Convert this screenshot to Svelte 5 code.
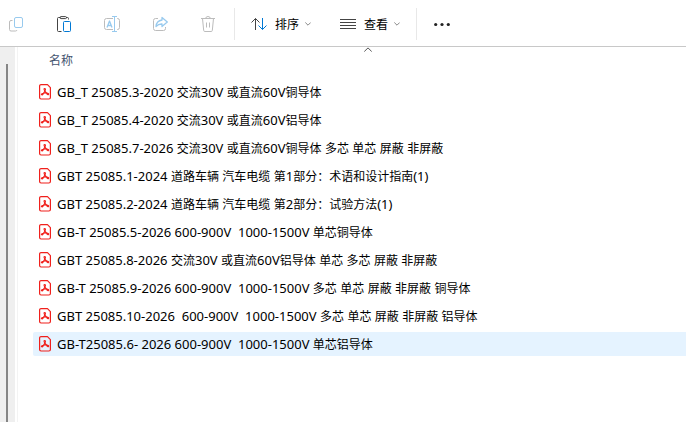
<script lang="ts">
	let files = [
		'GB_T 25085.3-2020 交流30V 或直流60V铜导体',
		'GB_T 25085.4-2020 交流30V 或直流60V铝导体',
		'GB_T 25085.7-2026 交流30V 或直流60V铜导体 多芯 单芯 屏蔽 非屏蔽',
		'GBT 25085.1-2024 道路车辆 汽车电缆 第1部分：术语和设计指南(1)',
		'GBT 25085.2-2024 道路车辆 汽车电缆 第2部分：试验方法(1)',
		'GB-T 25085.5-2026 600-900V  1000-1500V 单芯铜导体',
		'GBT 25085.8-2026 交流30V 或直流60V铝导体 单芯 多芯 屏蔽 非屏蔽',
		'GB-T 25085.9-2026 600-900V  1000-1500V 多芯 单芯 屏蔽 非屏蔽 铜导体',
		'GBT 25085.10-2026  600-900V  1000-1500V 多芯 单芯 屏蔽 非屏蔽 铝导体',
		'GB-T25085.6- 2026 600-900V  1000-1500V 单芯铝导体'
	]

	let selected = $state(9)

	// odd entries are the Chinese runs, which are set a size smaller
	function runs(name: string) {
		return name.split(/([\u3000-\uffff]+)/)
	}
</script>

{#snippet chevron()}
	<svg class="chevron" width="6" height="4" viewBox="0 0 6 4"><path d="M.3 .5 3 3.200 5.700 .5" /></svg>
{/snippet}

<div class="explorer">
	<div class="toolbar" role="toolbar" aria-label="命令栏">
		<div class="group">
			<button class="icon-btn" aria-label="复制" disabled>
				<svg width="16" height="16" viewBox="0 0 16 16">
					<path class="pale-gray" d="M4.500 4.500H3A1.500 1.500 0 0 0 1.500 6v7.500A1.500 1.500 0 0 0 3 15h4.500a1.500 1.500 0 0 0 1.500-1" />
					<rect class="pale-blue" x="6.500" y="1.500" width="8" height="10" rx="1.500" />
				</svg>
			</button>
			<button class="icon-btn" aria-label="粘贴">
				<svg width="16" height="16" viewBox="0 0 16 16">
					<path class="dark" d="M4.500 1.500H2.500a1 1 0 0 0-1 1v12a1 1 0 0 0 1 1h3M10 1.500h1.500a1 1 0 0 1 1 1v1" />
					<path class="dark" d="M5 .6h4.500a.9 .9 0 0 1 0 2H5a.9 .9 0 0 1 0-2z" />
					<rect class="blue" x="7.500" y="5.500" width="7" height="10" rx="1" />
				</svg>
			</button>
			<button class="icon-btn" aria-label="重命名" disabled>
				<svg width="16" height="16" viewBox="0 0 16 16">
					<path class="pale-gray" d="M9 2.500H2.500a2 2 0 0 0-2 2v7a2 2 0 0 0 2 2H9M13 2.500h.5a2 2 0 0 1 2 2v7a2 2 0 0 1-2 2H13" />
					<path class="pale-blue letter" d="M3 11.500 5.500 5 8 11.500M4 9.500h3" />
					<path class="pale-blue" d="M8 .5h5M8 15.500h5M10.500 .5v15" />
				</svg>
			</button>
			<button class="icon-btn" aria-label="共享" disabled>
				<svg width="16" height="16" viewBox="0 0 16 16">
					<path class="pale-gray" d="M6 2.500H3.500a2 2 0 0 0-2 2v8a2 2 0 0 0 2 2h8a2 2 0 0 0 2-2V11" />
					<path class="pale-blue letter" d="M10 1.500 15.300 6 10 10.500V8Q6.500 7.800 4 10.500 4.500 4.800 10 4z" />
				</svg>
			</button>
			<button class="icon-btn" aria-label="删除" disabled>
				<svg width="16" height="16" viewBox="0 0 16 16">
					<path class="pale-gray" d="M1 2.500h14M5.700 2.500a2.300 2 0 0 1 4.600 0M2.500 2.500l1.200 12q.1 1 1.100 1h6.400q1 0 1.100-1l1.200-12M6.500 6.500v5M9.500 6.500v5" />
				</svg>
			</button>
		</div>

		<div class="group menus">
			<button class="menu-btn">
				<svg width="16" height="16" viewBox="0 0 16 16">
					<path class="dark" d="M4.500 14V2.500M.5 6.500l4-4 4 4" />
					<path class="blue" d="M11.500 2v11.500M7.500 9.500l4 4 4-4" />
				</svg>
				<span>排序</span>
				{@render chevron()}
			</button>
			<button class="menu-btn">
				<svg width="16" height="16" viewBox="0 0 16 16">
					<path class="dark" d="M0 3.500h16M0 6.500h16M0 9.500h16M0 12.500h16" />
				</svg>
				<span>查看</span>
				{@render chevron()}
			</button>
		</div>

		<button class="icon-btn more" aria-label="更多">
			<svg width="16" height="16" viewBox="0 0 16 16">
				<circle cx="1.700" cy="8.500" r="1.600" />
				<circle cx="8" cy="8.500" r="1.600" />
				<circle cx="14.300" cy="8.500" r="1.600" />
			</svg>
		</button>
	</div>

	<div class="body">
		<div class="nav"><div class="thumb"></div></div>
		<main>
			<button class="column">
				<span>名称</span>
				<svg class="sort-mark" width="8" height="5" viewBox="0 0 8 5"><path d="M.3 4.500 4 .9l3.700 3.600" /></svg>
			</button>
			<ul>
				{#each files as name, i}
					<li>
						<button class="file" class:selected={selected === i} onclick={() => (selected = i)}>
							<svg class="pdf" width="12" height="16" viewBox="0 0 12 16">
								<path d="M2 .6h6.500l2.900 3V13.500a1.500 1.500 0 0 1-1.500 1.500H2a1.400 1.400 0 0 1-1.400-1.400V2A1.400 1.400 0 0 1 2 .6z" />
								<path class="mark" d="M5.900 7C4.800 5.600 4.800 4.500 5.700 4.500s1 1.200.2 2.500M5.900 7 4.500 9.300M5.900 7l1.700 2.200M4.500 9.300c1-.4 2.100-.4 3.100-.1M4.500 9.300c-.4 1.400-1.500 1.900-2 1.400s.4-1.400 2-1.400M7.600 9.200c1.500-.2 2.400.5 2 1.200s-1.500.2-2-1.200" />
							</svg>
							<span class="name">{#each runs(name) as run, n}{#if n % 2}<span class="han">{run}</span>{:else}{run}{/if}{/each}</span>
						</button>
					</li>
				{/each}
			</ul>
		</main>
	</div>
</div>

<style>
	:global(body) {
		margin: 0;
		background: #fff;
	}

	.explorer {
		display: flex;
		flex-direction: column;
		min-height: 100vh;
		font-family: 'Noto Sans', 'Noto Sans CJK SC', sans-serif;
		font-size: 12px;
		color: #000;
	}

	button {
		padding: 0;
		border: 0;
		background: none;
		font: inherit;
		color: inherit;
	}

	svg {
		flex: none;
		fill: none;
		stroke-linejoin: round;
	}

	.toolbar {
		display: flex;
		align-items: center;
		height: 46px;
		border-bottom: 1px solid #c8c8c8;
	}

	.group {
		display: flex;
		align-items: center;
		height: 32px;
		gap: 16px;
		margin-top: 2px;
		padding-right: 10px;
		border-right: 1px solid #e8e8e8;
	}

	.icon-btn {
		display: flex;
		align-items: center;
		justify-content: center;
		width: 32px;
		height: 32px;
	}

	.menus {
		gap: 5px;
		padding-right: 8px;
	}

	.menu-btn {
		display: flex;
		align-items: center;
		gap: 8px;
		height: 32px;
		padding: 0 8px 0 16px;
	}

	.menu-btn .chevron {
		margin-left: -2px;
	}

	.chevron {
		stroke: #888;
	}

	.more {
		margin-left: 9px;
		margin-top: 2px;
	}

	.more circle {
		fill: #222;
	}

	.dark {
		stroke: #444;
	}

	.blue {
		stroke: #0078d4;
	}

	.pale-gray {
		stroke: #bcbcbc;
	}

	.pale-blue {
		stroke: #98caee;
	}

	.letter {
		stroke-width: 1.3;
	}

	.body {
		display: flex;
		flex: 1;
	}

	.nav {
		flex: none;
		width: 9px;
		padding: 17px 0 0 6px;
		background: #efefef;
	}

	.thumb {
		width: 2px;
		height: 100%;
		background: #858585;
	}

	main {
		flex: 1;
		min-width: 0;
		margin-left: 2px;
		padding-left: 15px;
		border-left: 1px solid #f3f3f3;
	}

	.column {
		display: flex;
		align-items: flex-start;
		justify-content: space-between;
		width: 100%;
		max-width: 339px;
		height: 31px;
		padding-left: 16px;
		color: #44546f;
	}

	.column span {
		line-height: 28px;
	}

	.sort-mark {
		stroke: #555;
	}

	ul {
		display: flex;
		flex-direction: column;
		gap: 4px;
		margin: 0;
		padding: 2px 0 0;
		list-style: none;
	}

	.file {
		display: flex;
		align-items: center;
		gap: 6px;
		width: 100%;
		height: 24px;
		padding-left: 6px;
		border-radius: 2px 0 0 2px;
		text-align: left;
	}

	.file:hover {
		background: #f0f8ff;
	}

	.file.selected {
		background: #e5f3ff;
	}

	.name {
		font-size: 13px;
		line-height: 24px;
		white-space: pre;
	}

	.han {
		font-size: 12px;
	}

	.pdf {
		stroke: #f0201c;
		stroke-width: 1.2;
	}

	.pdf .mark {
		stroke-width: 1.1;
	}
</style>
